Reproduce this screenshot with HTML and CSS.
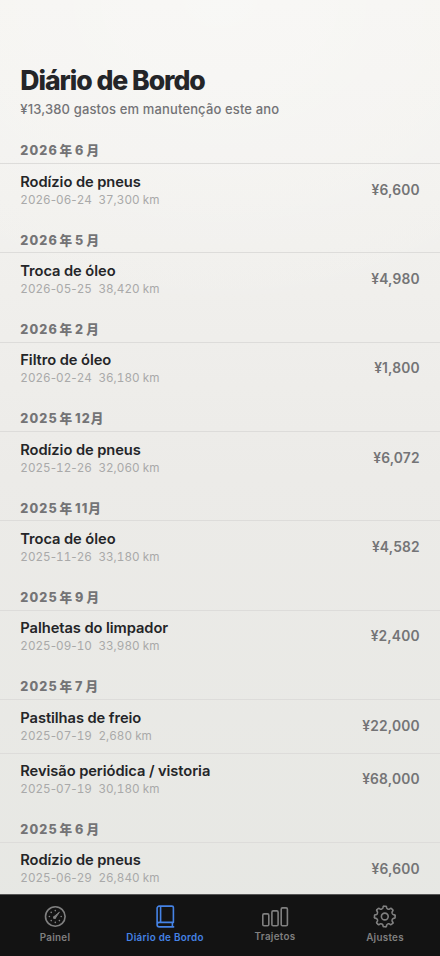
FILE: index.html
```html
<!DOCTYPE html>
<html lang="pt">
<head>
<meta charset="utf-8">
<meta name="viewport" content="width=device-width, initial-scale=1">
<title>Diário de Bordo</title>
<link rel="stylesheet" href="styles.css">
</head>
<body>
<div class="screen">
  <main class="log">
    <header class="heading">
      <h1 class="title">Diário de Bordo</h1>
      <p class="summary">¥13,380 gastos em manutenção este ano</p>
    </header>

    <section class="group">
      <h2 class="month">2026<span class="year">年</span>6<span>月</span></h2>
      <article class="entry"><div><h3 class="name">Rodízio de pneus</h3><p class="meta"><span>2026<i>-</i>06<i>-</i>24</span><span>37,300 km</span></p></div><span class="cost">¥6,600</span></article>
    </section>
    <section class="group">
      <h2 class="month">2026<span class="year">年</span>5<span>月</span></h2>
      <article class="entry"><div><h3 class="name">Troca de óleo</h3><p class="meta"><span>2026<i>-</i>05<i>-</i>25</span><span>38,420 km</span></p></div><span class="cost">¥4,980</span></article>
    </section>
    <section class="group">
      <h2 class="month">2026<span class="year">年</span>2<span>月</span></h2>
      <article class="entry"><div><h3 class="name">Filtro de óleo</h3><p class="meta"><span>2026<i>-</i>02<i>-</i>24</span><span>36,180 km</span></p></div><span class="cost">¥1,800</span></article>
    </section>
    <section class="group">
      <h2 class="month two-digit">2025<span class="year">年</span>12<span>月</span></h2>
      <article class="entry"><div><h3 class="name">Rodízio de pneus</h3><p class="meta"><span>2025<i>-</i>12<i>-</i>26</span><span>32,060 km</span></p></div><span class="cost">¥6,072</span></article>
    </section>
    <section class="group">
      <h2 class="month two-digit">2025<span class="year">年</span>11<span>月</span></h2>
      <article class="entry"><div><h3 class="name">Troca de óleo</h3><p class="meta"><span>2025<i>-</i>11<i>-</i>26</span><span>33,180 km</span></p></div><span class="cost">¥4,582</span></article>
    </section>
    <section class="group">
      <h2 class="month">2025<span class="year">年</span>9<span>月</span></h2>
      <article class="entry"><div><h3 class="name">Palhetas do limpador</h3><p class="meta"><span>2025<i>-</i>09<i>-</i>10</span><span>33,980 km</span></p></div><span class="cost">¥2,400</span></article>
    </section>
    <section class="group">
      <h2 class="month">2025<span class="year">年</span>7<span>月</span></h2>
      <article class="entry"><div><h3 class="name">Pastilhas de freio</h3><p class="meta"><span>2025<i>-</i>07<i>-</i>19</span><span>2,680 km</span></p></div><span class="cost">¥22,000</span></article>
      <article class="entry"><div><h3 class="name">Revisão periódica / vistoria</h3><p class="meta"><span>2025<i>-</i>07<i>-</i>19</span><span>30,180 km</span></p></div><span class="cost">¥68,000</span></article>
    </section>
    <section class="group">
      <h2 class="month">2025<span class="year">年</span>6<span>月</span></h2>
      <article class="entry"><div><h3 class="name">Rodízio de pneus</h3><p class="meta"><span>2025<i>-</i>06<i>-</i>29</span><span>26,840 km</span></p></div><span class="cost">¥6,600</span></article>
    </section>
  </main>

  <nav class="tabs">
    <a class="tab">
      <svg class="icon" viewBox="0 0 28 26" fill="none" stroke="currentColor" stroke-width="1.6">
        <circle cx="14.3" cy="13.5" r="9.8"/>
        <path d="M18.4 9.2 14.6 14.6 13.3 13.4Z" fill="currentColor" stroke-linejoin="round" stroke-width="1"/>
        <circle cx="13.6" cy="14.4" r="1.6" fill="currentColor" stroke="none"/>
        <path d="M14.3 7.6h.01M10.2 9.4h.01M8.4 13.5h.01M10.2 17.6h.01M14.3 19.4h.01M18.4 17.6h.01M20.2 13.5h.01" stroke-linecap="round"/>
      </svg>
      <span>Painel</span>
    </a>
    <a class="tab active">
      <svg class="icon" viewBox="0 0 28 26" fill="none" stroke="currentColor" stroke-width="1.6" stroke-linejoin="round" stroke-linecap="round">
        <path d="M22.4 19.4V4.6a1.5 1.5 0 0 0-1.5-1.5H8.3A2.2 2.2 0 0 0 6.1 5.3v16.4a2.2 2.2 0 0 0 2.2 2.2h14.3M6.1 21.6a2.2 2.2 0 0 1 2.2-2.2h14.1M9.6 3.3v16M21.4 19.5v4.2"/>
      </svg>
      <span>Diário de Bordo</span>
    </a>
    <a class="tab">
      <svg class="icon" viewBox="0 0 28 26" fill="none" stroke="currentColor" stroke-width="1.6">
        <rect x="1.8" y="10.9" width="6" height="11.8" rx="1.3"/>
        <rect x="10.9" y="7.9" width="6.2" height="14.8" rx="1.3"/>
        <rect x="20.2" y="4.9" width="6.2" height="17.8" rx="1.3"/>
      </svg>
      <span class="raised">Trajetos</span>
    </a>
    <a class="tab">
      <svg class="icon" viewBox="0 0 28 26" fill="none" stroke="currentColor" stroke-width="1.6" stroke-linejoin="round" stroke-linecap="round">
        <defs><path id="cog" d="M-1-10.3H1Q1.6-10.3 1.7-9.7L1.9-8.5Q2.1-7.9 2.9-7.5Q4.1-7.07 4.67-7.35L5.66-8.06Q6.15-8.41 6.58-7.99"/></defs>
        <g transform="translate(13.8 13.5)">
          <circle r="3.4"/>
          <use href="#cog"/><use href="#cog" transform="rotate(45)"/><use href="#cog" transform="rotate(90)"/><use href="#cog" transform="rotate(135)"/><use href="#cog" transform="rotate(180)"/><use href="#cog" transform="rotate(225)"/><use href="#cog" transform="rotate(270)"/><use href="#cog" transform="rotate(315)"/>
        </g>
      </svg>
      <span>Ajustes</span>
    </a>
  </nav>
</div>
</body>
</html>
```
FILE: styles.css
```css
* { box-sizing: border-box; margin: 0; padding: 0; }

body {
  font-family: Inter, "Noto Sans CJK JP", sans-serif;
  color: #242528;
}

.screen {
  display: flex;
  flex-direction: column;
  height: 956px;
  overflow: hidden;
  background: radial-gradient(ellipse 420px 320px at 50% 0, rgba(255, 255, 255, .35), transparent),
    linear-gradient(#f5f4f1 0, #f3f2ef 16%, #ecebe8 50%, #e6e7e3 100%);
}

.log { flex: 1; min-height: 0; overflow: hidden; }

.heading { height: 127.3px; padding: 63px 20.3px 0; }
.title { font-size: 26.6px; line-height: 34px; font-weight: 800; letter-spacing: -1.05px; white-space: nowrap; }
.summary { margin-top: 4px; font-size: 13px; line-height: 17px; font-weight: 500; letter-spacing: .14px; color: #737376; white-space: nowrap; }

.month {
  height: 35.7px;
  padding: 16px 20.3px 0;
  font-size: 12.6px;
  line-height: 16px;
  font-weight: 800;
  letter-spacing: 1.15px;
  color: #747476;
  white-space: nowrap;
}
.year { margin: 0 1.8px 0 1.5px; }
.month span:last-child { margin-left: 2px; }
.two-digit span:last-child { margin-left: 0; }

.entry {
  display: flex;
  justify-content: space-between;
  align-items: center;
  height: 53.65px;
  padding: 0 20.3px;
  border-top: 1px solid #dddcda;
}
.name { font-size: 14.7px; line-height: 18px; margin-top: .5px; font-weight: 600; letter-spacing: -.07px; white-space: nowrap; }
.meta {
  display: flex;
  gap: 6.5px;
  font-size: 11.7px;
  line-height: 18px;
  color: #a9a9a9;
  letter-spacing: .02px;
  font-variant-numeric: tabular-nums;
  white-space: nowrap;
}
.meta i { font-style: normal; font-variant-numeric: normal; }
.cost { margin-top: -1px; font-size: 13.8px; font-weight: 600; letter-spacing: .15px; color: #747476; }

.tabs {
  display: grid;
  grid-template-columns: repeat(4, 1fr);
  height: 62px;
  flex: none;
  background: #131313;
  border-top: 1px solid #555;
}
.tab {
  display: flex;
  flex-direction: column;
  align-items: center;
  padding-top: 8px;
  font-size: 9.8px;
  line-height: 14px;
  font-weight: 600;
  letter-spacing: .3px;
  color: #808080;
}
.active { color: #4583e6; }
.icon { width: 28px; height: 26px; margin-bottom: 2px; }
.raised { margin-top: -1px; }
```
